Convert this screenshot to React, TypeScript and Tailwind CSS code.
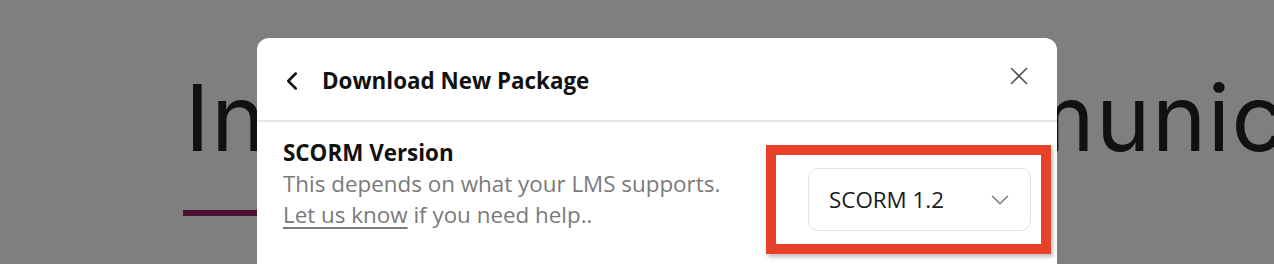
import { ChevronLeft, ChevronDown, X } from "lucide-react"

const openSans = "font-['Open_Sans',sans-serif]"

function Backdrop() {
  return (
    <div className="pl-[185px] pt-[72px] font-['Inter',sans-serif]">
      <h1 className="whitespace-nowrap text-[92px] leading-none font-normal tracking-[1.5px] text-[#222226]">
        Interpersonal Communication
      </h1>
      <div className="-ml-[2px] mt-[46px] h-[6px] w-[180px] bg-[#971e64]" />
    </div>
  )
}

function VersionSelect() {
  return (
    <div className="flex h-[63px] w-[223px] items-center justify-between rounded-[10px] border border-[#e2e2e2] bg-white pl-[20px] pr-[15px]">
      <span className="text-[22.4px] leading-[30px] text-[#1a1a1a]">SCORM 1.2</span>
      <ChevronDown className="h-[30px] w-[30px] text-[#7a7a7a]" strokeWidth={1.2} />
    </div>
  )
}

export default function App() {
  return (
    <div className="relative h-[264px] w-full overflow-hidden bg-white">
      <Backdrop />
      <div className="absolute inset-0 bg-black/50" />

      <div className={`absolute left-[257px] top-[38px] h-[260px] w-[800px] rounded-[12px] bg-white ${openSans}`}>
        <div className="flex h-[84px] items-center justify-between border-b-2 border-[#e6e6e6] pl-[20px] pr-[23px] pt-[4px]">
          <div className="flex items-center gap-[15px]">
            <ChevronLeft className="h-[30px] w-[30px] text-[#111]" strokeWidth={2} />
            <h2 className="text-[22.4px] leading-[30px] font-bold text-[#111]">Download New Package</h2>
          </div>
          <X className="mb-[10px] h-[30px] w-[30px] text-[#555]" strokeWidth={1.3} />
        </div>

        <div className="flex items-start justify-between pl-[26px] pr-[26px] pt-[16px]">
          <div>
            <h3 className="text-[22.4px] leading-[30px] font-bold text-[#111]">SCORM Version</h3>
            <p className="text-[22.4px] leading-[31px] text-[#7a7a7a]">
              This depends on what your LMS supports.
              <br />
              <a className="underline decoration-[1.5px] underline-offset-[4px]">Let us know</a> if you need help..
            </p>
          </div>
          <div className="mt-[30px]">
            <VersionSelect />
          </div>
        </div>
      </div>

      {/* annotation highlight */}
      <div className="absolute left-[766px] top-[145px] h-[109px] w-[285px] border-[10px] border-[#e8412a] shadow-[2px_3px_4px_rgba(0,0,0,0.25)]" />
    </div>
  )
}
